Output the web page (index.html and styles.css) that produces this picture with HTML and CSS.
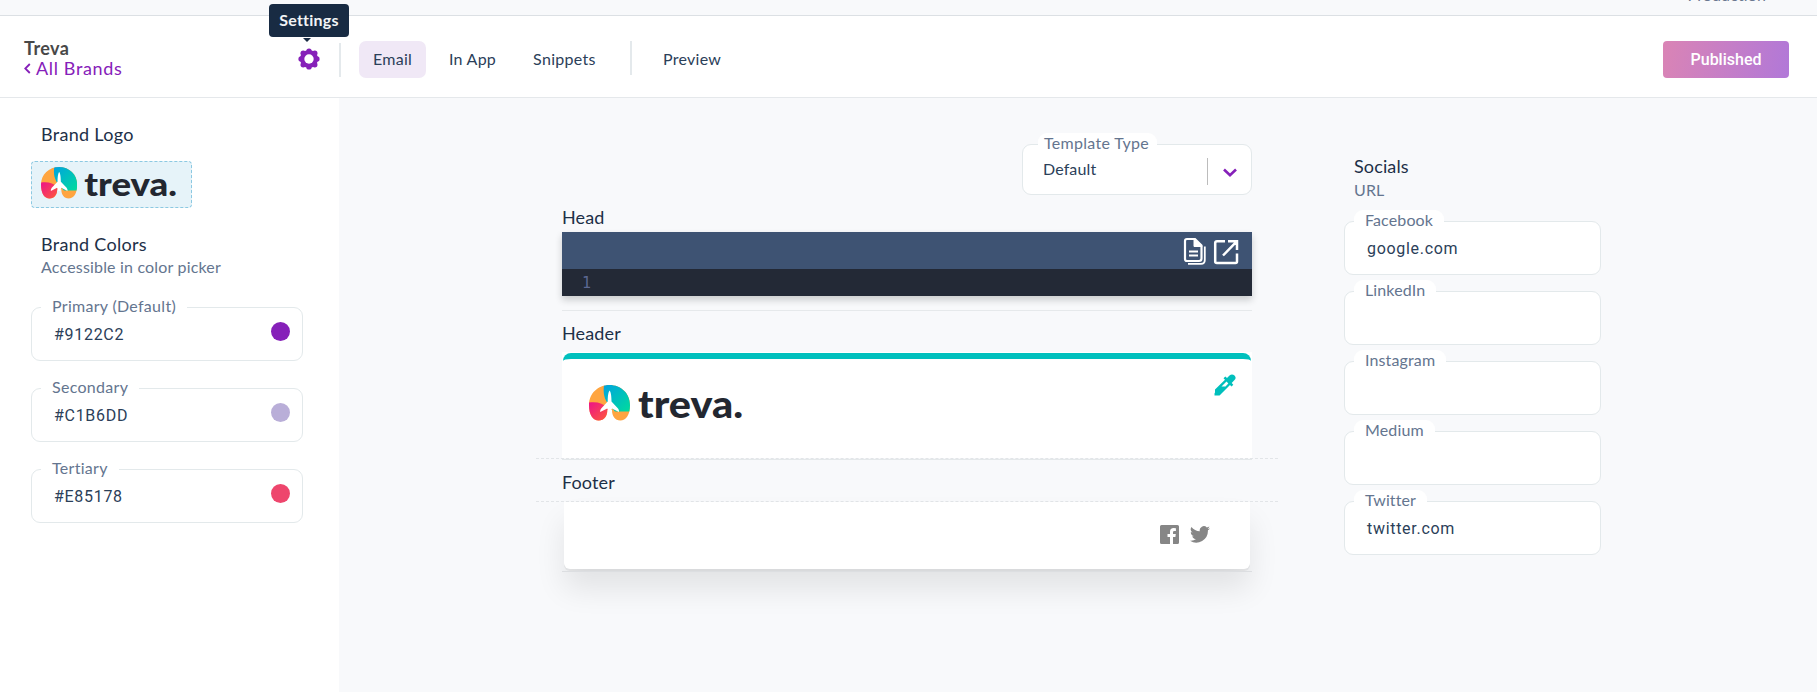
FILE: index.html
```
<!DOCTYPE html>
<html lang="en">
<head>
<meta charset="utf-8">
<title>Treva brand designer</title>
<link rel="stylesheet" href="styles.css">
</head>
<body>
<svg class="defs" width="0" height="0" aria-hidden="true">
  <defs>
    <linearGradient id="teal" x1="0" y1="0" x2="1" y2="1"><stop offset="0" stop-color="#00a3e0"/><stop offset="1" stop-color="#00dc9c"/></linearGradient>
    <linearGradient id="pink" x1="0" y1="0" x2="1" y2="1"><stop offset="0" stop-color="#ec1389"/><stop offset="1" stop-color="#ff5c38"/></linearGradient>
    <clipPath id="mark"><path d="M0 20C0 8.500 9 0 20.500 0S41 8.500 41 20C41 30 37 35.500 31.300 35.500 26 35.500 23 31 23 25H18.300C18.300 31 15.300 35.500 9.700 35.500 4 35.500 0 30 0 20Z"/></clipPath>
    <symbol id="treva" viewBox="0 0 154 36">
      <g clip-path="url(#mark)">
        <rect width="41" height="36" fill="#ffa540"/>
        <path d="M15 0C14 8 15 14 20 20L26 26.500H41V0Z" fill="url(#teal)"/>
        <path d="M0 17.500C8 16.500 14 18 19 23V36H0Z" fill="url(#pink)"/>
      </g>
      <path d="M20.600 5.500C21.800 7 22.400 10 22.500 16.500L29 23.500C30 25 30.200 26 30 27L23 23.500 21.500 27H19.700L18.200 23.500 11.200 27C11 26 11.200 25 12.200 23.500L18.700 16.500C18.800 10 19.400 7 20.600 5.500Z" fill="#fff"/>
      <text x="49" y="32.500" textLength="105" lengthAdjust="spacingAndGlyphs" class="wordmark">treva.</text>
    </symbol>
  </defs>
</svg>

<div class="topbar"><span>Production</span></div>

<header class="header">
  <div class="crumb">
    <div>
      <div class="brand">Treva</div>
      <a class="back"><svg width="7" height="11" viewBox="0 0 7 11"><path d="M5.800 1 1.300 5.500 5.800 10" fill="none" stroke="currentColor" stroke-width="1.800"/></svg>All Brands</a>
    </div>
    <div class="gear">
      <svg width="22" height="22" viewBox="-11 -11 22 22">
        <g fill="#8620b9"><circle r="9"/><circle cy="-7.900" r="2.700"/><circle cy="7.900" r="2.700"/><circle cx="-7.900" r="2.700"/><circle cx="7.900" r="2.700"/><circle cx="5.800" cy="5.800" r="2.700"/><circle cx="-5.800" cy="5.800" r="2.700"/><circle cx="5.800" cy="-5.800" r="2.700"/><circle cx="-5.800" cy="-5.800" r="2.700"/></g>
        <circle r="4.700" fill="#fff"/>
      </svg>
      <div class="tooltip">Settings</div>
    </div>
  </div>
  <nav class="nav">
    <a class="tab active">Email</a><a class="tab">In App</a><a class="tab snippets">Snippets</a><a class="tab preview">Preview</a>
  </nav>
  <button class="publish">Published</button>
</header>

<div class="body">
  <aside class="sidebar">
    <h2>Brand Logo</h2>
    <div class="logo-box"><svg class="logo-small"><use href="#treva"/></svg></div>
    <h2>Brand Colors</h2>
    <p class="sub">Accessible in color picker</p>
    <div class="colors">
      <div class="field"><label>Primary (Default)</label><span class="value">#9122C2</span><i class="swatch purple"></i></div>
      <div class="field"><label>Secondary</label><span class="value">#C1B6DD</span><i class="swatch lilac"></i></div>
      <div class="field"><label>Tertiary</label><span class="value">#E85178</span><i class="swatch red"></i></div>
    </div>
  </aside>

  <main class="canvas">
    <div class="select field">
      <label>Template Type</label><span class="choice">Default</span>
      <span class="arrow"><svg width="14" height="10" viewBox="0 0 14 10"><path d="M1 1.500 7 7.300 13 1.500" fill="none" stroke="#8620b9" stroke-width="2.600"/></svg></span>
    </div>
    <h3 class="t-head">Head</h3>
    <div class="editor">
      <div class="toolbar">
        <svg width="24" height="28" viewBox="0 0 24 28" fill="none" stroke="#fff" stroke-width="2.200">
          <path d="M4 2H12L18.500 8.500V21.500Q18.500 24 16 24H4Q2 24 2 22V4Q2 2 4 2Z"/><path d="M11 1.500V9.500H19L11 1.500Z" fill="#fff" stroke-width="1"/><path d="M6 14.500H15M6 18.500H15"/><path d="M21.800 9.500V23Q21.800 26.800 18 26.800H5" stroke-width="1.800"/>
        </svg>
        <svg width="26" height="26" viewBox="0 0 26 26" fill="none" stroke="#fff" stroke-width="2.500">
          <path d="M12 2.200H4Q2.200 2.200 2.200 4V22.500Q2.200 24 4 24H22.500Q24 24 24 22.500V14.500M15 2.200H24V11M23.500 2.700 10 16.500"/>
        </svg>
      </div>
      <div class="code">1</div>
    </div>
    <h3 class="t-header">Header</h3>
    <div class="email-header">
      <div class="stripe"></div>
      <svg class="logo-large"><use href="#treva"/></svg>
      <svg class="dropper" width="22" height="22" viewBox="0 0 22 22">
        <path d="M20.500 1.500C19 0 17 0 15.500 1.500L13 4 11.300 2.500 9.500 4.200 11 5.700 1 15.500V18.500L.5 19.500V21.500H5.500L16 11 17.500 12.500 19.300 10.700 17.700 9 20.500 6C22 4.500 22 3 20.500 1.500Z" fill="#00bfbc"/><path d="M12.500 7.500 7.500 12.500H11.500L14.300 9.500Z" fill="#fff"/>
      </svg>
    </div>
    <div class="footer-title"><h3>Footer</h3></div>
    <div class="email-footer">
      <svg width="19" height="19" viewBox="0 0 19 19"><path d="M1.500 0H17.500Q19 0 19 1.500V17.500Q19 19 17.500 19H13V12H15.400L15.800 9H13V7.200Q13 5.900 14.300 5.900H15.900V3.200L13.700 3Q10 3 10 6.700V9H7.500V12H10V19H1.500Q0 19 0 17.500V1.500Q0 0 1.500 0Z" fill="#868686"/></svg>
      <svg class="bird" width="20" height="17" viewBox="0 0 24 20"><path d="M24 2.400a10 10 0 0 1-2.800.8A5 5 0 0 0 23.300.5a10 10 0 0 1-3.100 1.200A4.900 4.900 0 0 0 11.800 6.200 14 14 0 0 1 1.700 1 4.900 4.900 0 0 0 3.200 7.600 5 5 0 0 1 1 7a4.900 4.900 0 0 0 3.900 4.900 5 5 0 0 1-2.200.1 4.900 4.900 0 0 0 4.600 3.400A9.900 9.900 0 0 1 0 17.500 14 14 0 0 0 21.500 5 10 10 0 0 0 24 2.400Z" fill="#868686"/></svg>
    </div>
    <div class="end-line"></div>
  </main>

  <section class="socials">
    <h2>Socials</h2>
    <p class="sub">URL</p>
    <div class="links">
      <div class="field"><label>Facebook</label><span class="value">google.com</span></div>
      <div class="field"><label>LinkedIn</label></div>
      <div class="field"><label>Instagram</label></div>
      <div class="field"><label>Medium</label></div>
      <div class="field"><label>Twitter</label><span class="value">twitter.com</span></div>
    </div>
  </section>
</div>
</body>
</html>
```
FILE: styles.css
```
* { box-sizing: border-box; }
body { margin: 0; height: 692px; overflow: hidden; background: #f8f9fb; color: #1d3048; font: 16px/20px Lato, "Noto Sans", sans-serif; letter-spacing: .13px; }
h2, h3, p { margin: 0; font-weight: 400; }
h2, h3 { font-size: 18px; line-height: 22px; }
svg { display: block; flex: none; }
.defs { position: absolute; }
.wordmark { font: 900 37px Lato, sans-serif; fill: #232730; letter-spacing: 0; }

.topbar { height: 16px; border-bottom: 1px solid #dce0e4; overflow: hidden; display: flex; justify-content: flex-end; padding-right: 51px; color: #6b7890; }
.topbar span { margin-top: -15px; }

.header { height: 82px; background: #fff; border-bottom: 1px solid #e5e8eb; display: flex; align-items: flex-start; padding: 25px 28px 0 24px; }
.crumb { width: 317px; height: 34px; margin-top: 2px; display: flex; justify-content: space-between; border-right: 2px solid #e4e9ec; }
.brand { font-size: 18px; font-weight: 700; line-height: 20px; color: #484848; margin-top: -5px; letter-spacing: .4px; }
.back { display: flex; align-items: center; gap: 5px; color: #8620b9; font-size: 18px; line-height: 20px; letter-spacing: .65px; }
.gear { position: relative; margin: 5px 19px 0 0; }
.tooltip { position: absolute; left: -29px; top: -44px; width: 80px; height: 33px; border-radius: 4px; background: #182b43; color: #f2f4f6; font-weight: 700; line-height: 32px; text-align: center; letter-spacing: .2px; }
.tooltip::after { content: ""; position: absolute; left: 34px; top: 34px; border: 4px solid transparent; border-top-color: #182b43; border-bottom: 0; }
.nav { display: flex; margin-left: 18px; color: #2b4059; }
.tab { height: 37px; line-height: 35px; padding: 0 13px; margin-right: 11px; border-radius: 7px; letter-spacing: .25px; }
.active { width: 67px; background: #f0e8f6; text-align: center; padding: 0; margin-right: 10px; }
.snippets { margin-right: 0; width: 112px; height: 34px; border-right: 2px solid #e4e9ec; border-radius: 0; letter-spacing: .3px; }
.preview { margin-left: 18px; }
.publish { margin-left: auto; width: 126px; height: 37px; border: 0; border-radius: 4px; background: linear-gradient(100deg, #da84b5, #b178d8); color: #fff; font: 500 16px/37px Roboto, sans-serif; padding: 0; }

.body { display: flex; height: 594px; }
.sidebar { width: 339px; background: #fff; padding: 25px 36px 0 31px; }
.sidebar h2, .sidebar .sub { padding-left: 10px; }
.sidebar h2 { letter-spacing: .3px; }
.sub { color: #64758f; }
.logo-box { width: 161px; height: 47px; margin: 16px 0 25px; padding: 5px 0 0 9px; background: #e6f3f9; border: 1px dashed #8cc9e2; border-radius: 4px; }
.logo-small { width: 136px; height: 32px; }
.sidebar .sub { margin-top: 2px; letter-spacing: .18px; }
.colors { display: flex; flex-direction: column; gap: 27px; margin-top: 30px; }

.field { position: relative; height: 54px; background: #fff; border: 1px solid #e3e9eb; border-radius: 9px; padding: 16px 12px 0 22px; display: flex; }
.field label { position: absolute; left: 9px; top: -12px; height: 24px; padding: 0 11px; line-height: 20px; border-radius: 9px 9px 0 0; background: #fff; color: #64758f; white-space: nowrap; }
.colors label { letter-spacing: .3px; }
.value { font-family: Roboto, sans-serif; font-size: 16px; line-height: 22px; letter-spacing: .7px; color: #2b4059; }
.swatch { width: 19px; height: 19px; border-radius: 50%; margin: -2px 0 0 auto; }
.purple { background: #8620b9; }
.lilac { background: #b9aed8; }
.red { background: #ee466d; }

.canvas { width: 690px; margin-left: 223px; padding-top: 46px; }
.select { width: 230px; height: 51px; margin-left: auto; padding: 13px 14px 0 20px; justify-content: space-between; }
.select label { left: 15px; padding: 0 8px 0 6px; letter-spacing: .3px; }
.choice { line-height: 22px; color: #2b4059; }
.arrow { height: 27px; border-left: 1px solid #bcbcbc; padding: 10px 0 0 15px; }
.t-head { margin-top: 11px; }
.editor { margin-top: 4px; box-shadow: 0 4px 7px rgba(20, 25, 25, .2); }
.toolbar { height: 37px; background: #3e5373; display: flex; justify-content: flex-end; gap: 6px; padding: 5px 13px 0 0; }
.toolbar svg + svg { margin-top: 2px; }
.code { height: 27px; background: #232936; color: #5c6892; font: 15px/29px "DejaVu Sans Mono", monospace; padding-left: 20px; }
.t-header { margin-top: 14px; border-top: 1px solid #e6e9eb; padding-top: 11px; }
.email-header { margin-top: 8px; height: 106px; background: #fff; position: relative; padding: 1px 1px 0; }
.stripe { height: 8px; border-top: 6px solid #00c0bd; border-radius: 8px 8px 0 0; }
.logo-large { width: 154px; height: 36px; margin: 24px 0 0 26px; }
.dropper { position: absolute; left: 652px; top: 22px; }
.footer-title { margin: 0 -26px; height: 44px; border-top: 1px dashed #e2e5e8; border-bottom: 1px dashed #e2e5e8; padding: 0 26px; }
.footer-title h3 { border-top: 1px solid #e4e8ea; padding-top: 11px; }
.email-footer { margin: 0 2px; height: 67px; background: #fff; border-radius: 0 0 6px 6px; box-shadow: 0 20px 30px rgba(0, 0, 0, .09), 0 2px 0 #ecedef; display: flex; justify-content: flex-end; gap: 11px; padding: 23px 40px 0 0; }
.bird { margin-top: 1px; }
.end-line { height: 1px; margin-top: 2px; background: #dcdee1; position: relative; }

.socials { width: 257px; margin-left: 92px; padding-top: 57px; }
.socials h2, .socials .sub { padding-left: 10px; }
.socials .sub { margin-top: 3px; }
.links { display: flex; flex-direction: column; gap: 16px; margin-top: 21px; }
```
